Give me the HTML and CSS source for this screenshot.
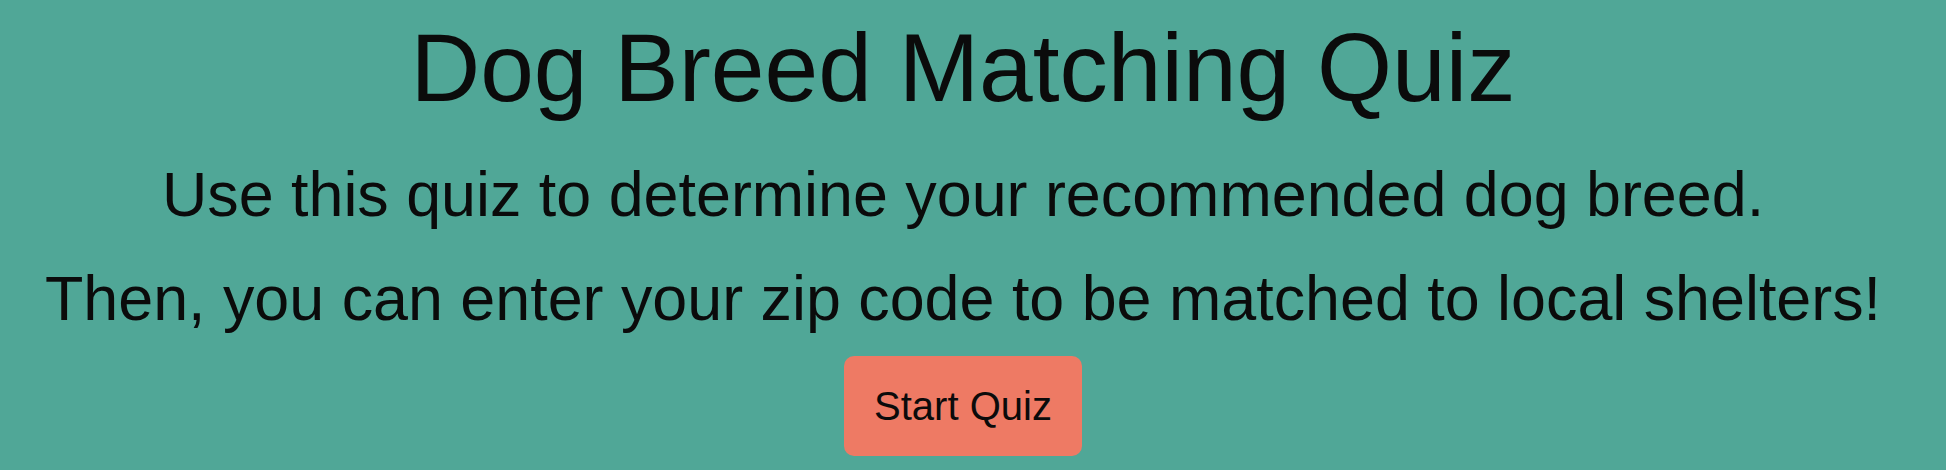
FILE: index.html
```html
<!DOCTYPE html>
<html lang="en">
<head>
<meta charset="utf-8">
<title>Dog Breed Matching Quiz</title>
<link rel="stylesheet" href="styles.css">
</head>
<body>
<main class="intro">
  <h1 class="title">Dog Breed Matching Quiz</h1>
  <p class="lead lead-first">Use this quiz to determine your recommended dog breed.</p>
  <p class="lead lead-second">Then, you can enter your zip code to be matched to local shelters!</p>
  <button class="start-btn" type="button">Start Quiz</button>
</main>
</body>
</html>
```
FILE: styles.css
```css
html, body {
  margin: 0;
  padding: 0;
  height: 100%;
}
body {
  background: #50a797;
  color: #0b0b0b;
  font-family: "Liberation Sans", Arial, Helvetica, sans-serif;
  overflow: hidden;
}
.intro {
  display: flex;
  flex-direction: column;
  align-items: center;
  padding-right: 20px;
}
.title {
  font-size: 96.5px;
  font-weight: 400;
  line-height: 1.15;
  margin: 13px 0 34px;
}
.lead {
  font-size: 62.8px;
  line-height: 1.15;
  margin: 0;
}
.lead-first {
  margin-bottom: 32px;
}
.lead-second {
  margin-bottom: 22px;
}
.start-btn {
  font-family: inherit;
  font-size: 40px;
  line-height: 46px;
  color: #0b0b0b;
  background: #ee7a64;
  border: none;
  border-radius: 10px;
  padding: 27px 30px;
  width: 238px;
  height: 100px;
  cursor: pointer;
}
```
